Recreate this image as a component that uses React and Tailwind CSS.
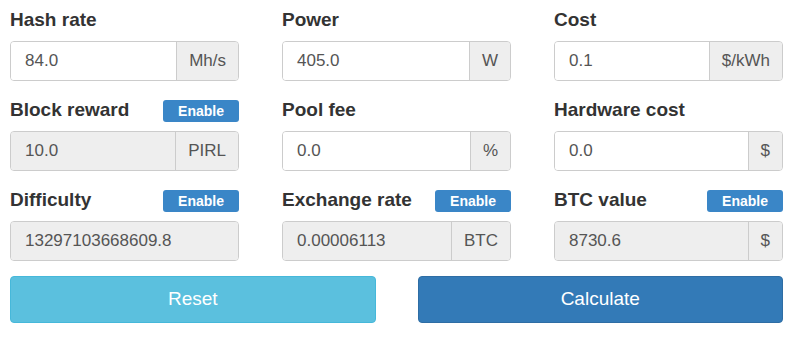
import React from 'react'

const fields = [
    { label: 'Hash rate', value: '84.0', addon: 'Mh/s' },
    { label: 'Power', value: '405.0', addon: 'W' },
    { label: 'Cost', value: '0.1', addon: '$/kWh' },
    { label: 'Block reward', value: '10.0', addon: 'PIRL', toggle: true },
    { label: 'Pool fee', value: '0.0', addon: '%' },
    { label: 'Hardware cost', value: '0.0', addon: '$' },
    { label: 'Difficulty', value: '13297103668609.8', toggle: true },
    { label: 'Exchange rate', value: '0.00006113', addon: 'BTC', toggle: true },
    { label: 'BTC value', value: '8730.6', addon: '$', toggle: true },
]

function Field({ label, value, addon, toggle }) {
    return (
        <div className="flex flex-col pt-[9px] pb-[9px]">
            <div className="flex items-baseline justify-between mb-[10px] h-[22px]">
                <span className="text-[19px] leading-[22px] font-bold text-[#333]">{label}</span>
                {toggle && (
                    <span className="w-[76px] h-[22px] leading-[22px] text-center text-[14px] font-bold text-white bg-[#3a86c7] rounded-[3px]">
                        Enable
                    </span>
                )}
            </div>
            <div className="flex h-[40px] rounded-[4px] border border-[#ccc] overflow-hidden shadow-[inset_0_1px_1px_rgba(0,0,0,0.075)]">
                <div
                    className={`flex-1 flex items-center pl-[14px] text-[17px] text-[#555] ${toggle ? 'bg-[#eee]' : 'bg-white'}`}
                >
                    {value}
                </div>
                {addon && (
                    <div className="flex items-center px-[12px] bg-[#eee] border-l border-[#ccc] text-[17px] text-[#555]">
                        {addon}
                    </div>
                )}
            </div>
        </div>
    )
}

export default function App() {
    return (
        <div
            className="w-[808px] h-[339px] bg-white pl-[10px]"
            style={{ fontFamily: '"Liberation Sans", Arial, sans-serif' }}
        >
            <div className="w-[773px] grid grid-cols-[229px_229px_229px] gap-x-[43px]">
                {fields.map((f) => (
                    <Field key={f.label} {...f} />
                ))}
            </div>
            <div className="w-[773px] grid grid-cols-2 gap-x-[42px] mt-[6px]">
                <button
                    type="button"
                    className="h-[47px] rounded-[4px] bg-[#5bc0de] border border-[#46b8da] text-white text-[19px]"
                >
                    Reset
                </button>
                <button
                    type="button"
                    className="h-[47px] rounded-[4px] bg-[#337ab7] border border-[#2e6da4] text-white text-[19px]"
                >
                    Calculate
                </button>
            </div>
        </div>
    )
}
